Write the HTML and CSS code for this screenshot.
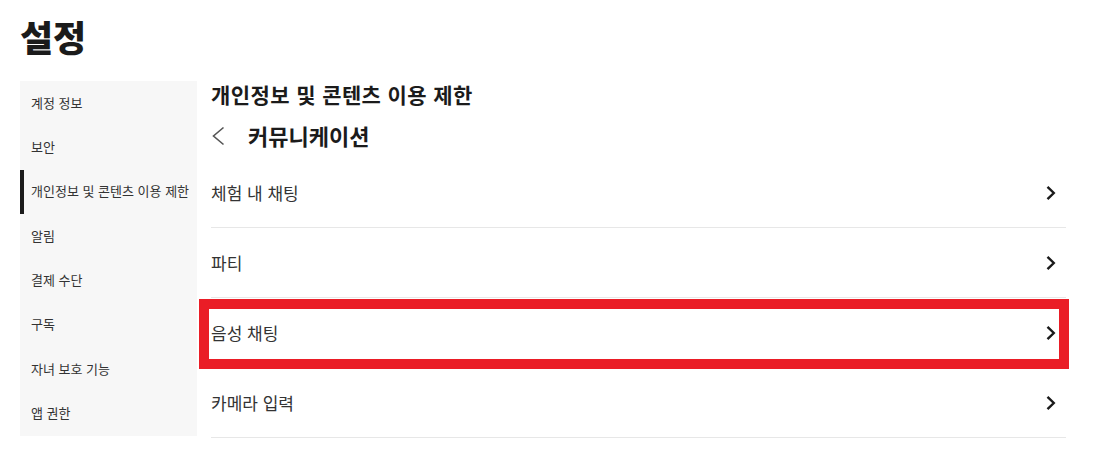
FILE: index.html
```html
<!DOCTYPE html>
<html lang="ko">
<head>
<meta charset="utf-8">
<title>설정</title>
<link rel="stylesheet" href="styles.css">
</head>
<body>
<div class="page">
  <h1 class="title">설정</h1>
  <div class="layout">
    <nav class="sidebar">
      <div class="nav-item">계정 정보</div>
      <div class="nav-item">보안</div>
      <div class="nav-item active">개인정보 및 콘텐츠 이용 제한</div>
      <div class="nav-item">알림</div>
      <div class="nav-item">결제 수단</div>
      <div class="nav-item">구독</div>
      <div class="nav-item">자녀 보호 기능</div>
      <div class="nav-item">앱 권한</div>
    </nav>
    <main class="content">
      <h2 class="section-title">개인정보 및 콘텐츠 이용 제한</h2>
      <div class="subhead">
        <svg class="back" width="14" height="20" viewBox="0 0 14 20"><path d="M12.5 1.5 L2.5 10 L12.5 18.5" fill="none" stroke="#555" stroke-width="1.6"/></svg>
        <span class="subtitle">커뮤니케이션</span>
      </div>
      <div class="row"><span class="label">체험 내 채팅</span><svg class="chev" width="12" height="16" viewBox="0 0 12 16"><path d="M2.5 1.8 L8.8 8 L2.5 14.2" fill="none" stroke="#1a1a1a" stroke-width="2.4"/></svg></div>
      <div class="row"><span class="label">파티</span><svg class="chev" width="12" height="16" viewBox="0 0 12 16"><path d="M2.5 1.8 L8.8 8 L2.5 14.2" fill="none" stroke="#1a1a1a" stroke-width="2.4"/></svg></div>
      <div class="row marked"><span class="label">음성 채팅</span><svg class="chev" width="12" height="16" viewBox="0 0 12 16"><path d="M2.5 1.8 L8.8 8 L2.5 14.2" fill="none" stroke="#1a1a1a" stroke-width="2.4"/></svg><span class="highlight"></span></div>
      <div class="row"><span class="label">카메라 입력</span><svg class="chev" width="12" height="16" viewBox="0 0 12 16"><path d="M2.5 1.8 L8.8 8 L2.5 14.2" fill="none" stroke="#1a1a1a" stroke-width="2.4"/></svg></div>
    </main>
  </div>
</div>
</body>
</html>
```

FILE: styles.css
```css
html, body {
  margin: 0;
  padding: 0;
  background: #ffffff;
}
body {
  font-family: "Noto Sans CJK KR", "Noto Sans", sans-serif;
  color: #222;
}
.page {
  padding: 14px 0 0 20px;
  width: 1046px;
}
.title {
  margin: 0;
  font-size: 36px;
  line-height: 44px;
  font-weight: 900;
  color: #1b1b1b;
}
.layout {
  display: flex;
  margin-top: 23px;
  gap: 14px;
}
.sidebar {
  width: 177px;
  flex: none;
  background: #f7f7f7;
  align-self: flex-start;
}
.nav-item {
  height: 44.35px;
  display: flex;
  align-items: center;
  padding-left: 11px;
  padding-bottom: 2px;
  font-size: 13px;
  color: #333;
  box-sizing: border-box;
  white-space: nowrap;
}
.nav-item.active {
  border-left: 4px solid #1b1b1b;
  padding-left: 7px;
}
.content {
  width: 855px;
}
.section-title {
  margin: 0;
  font-size: 21px;
  line-height: 27px;
  font-weight: 700;
  color: #1b1b1b;
  letter-spacing: 0.4px;
}
.subhead {
  display: flex;
  align-items: center;
  height: 34px;
  margin-top: 10px;
  gap: 23px;
}
.back {
  display: block;
  margin-top: 2px;
}
.subtitle {
  font-size: 22px;
  font-weight: 700;
  color: #1b1b1b;
}
.subhead + .row {
  margin-top: 6px;
}
.row {
  position: relative;
  height: 69px;
  border-bottom: 1px solid #e7e7e7;
  display: flex;
  align-items: center;
  justify-content: space-between;
  padding-right: 9px;
}
.label {
  font-size: 17px;
  color: #333;
}
.chev {
  display: block;
}
.highlight {
  position: absolute;
  left: -12px;
  right: -3px;
  top: 1px;
  bottom: -2px;
  border: 10px solid #ea1d26;
  pointer-events: none;
}
```
